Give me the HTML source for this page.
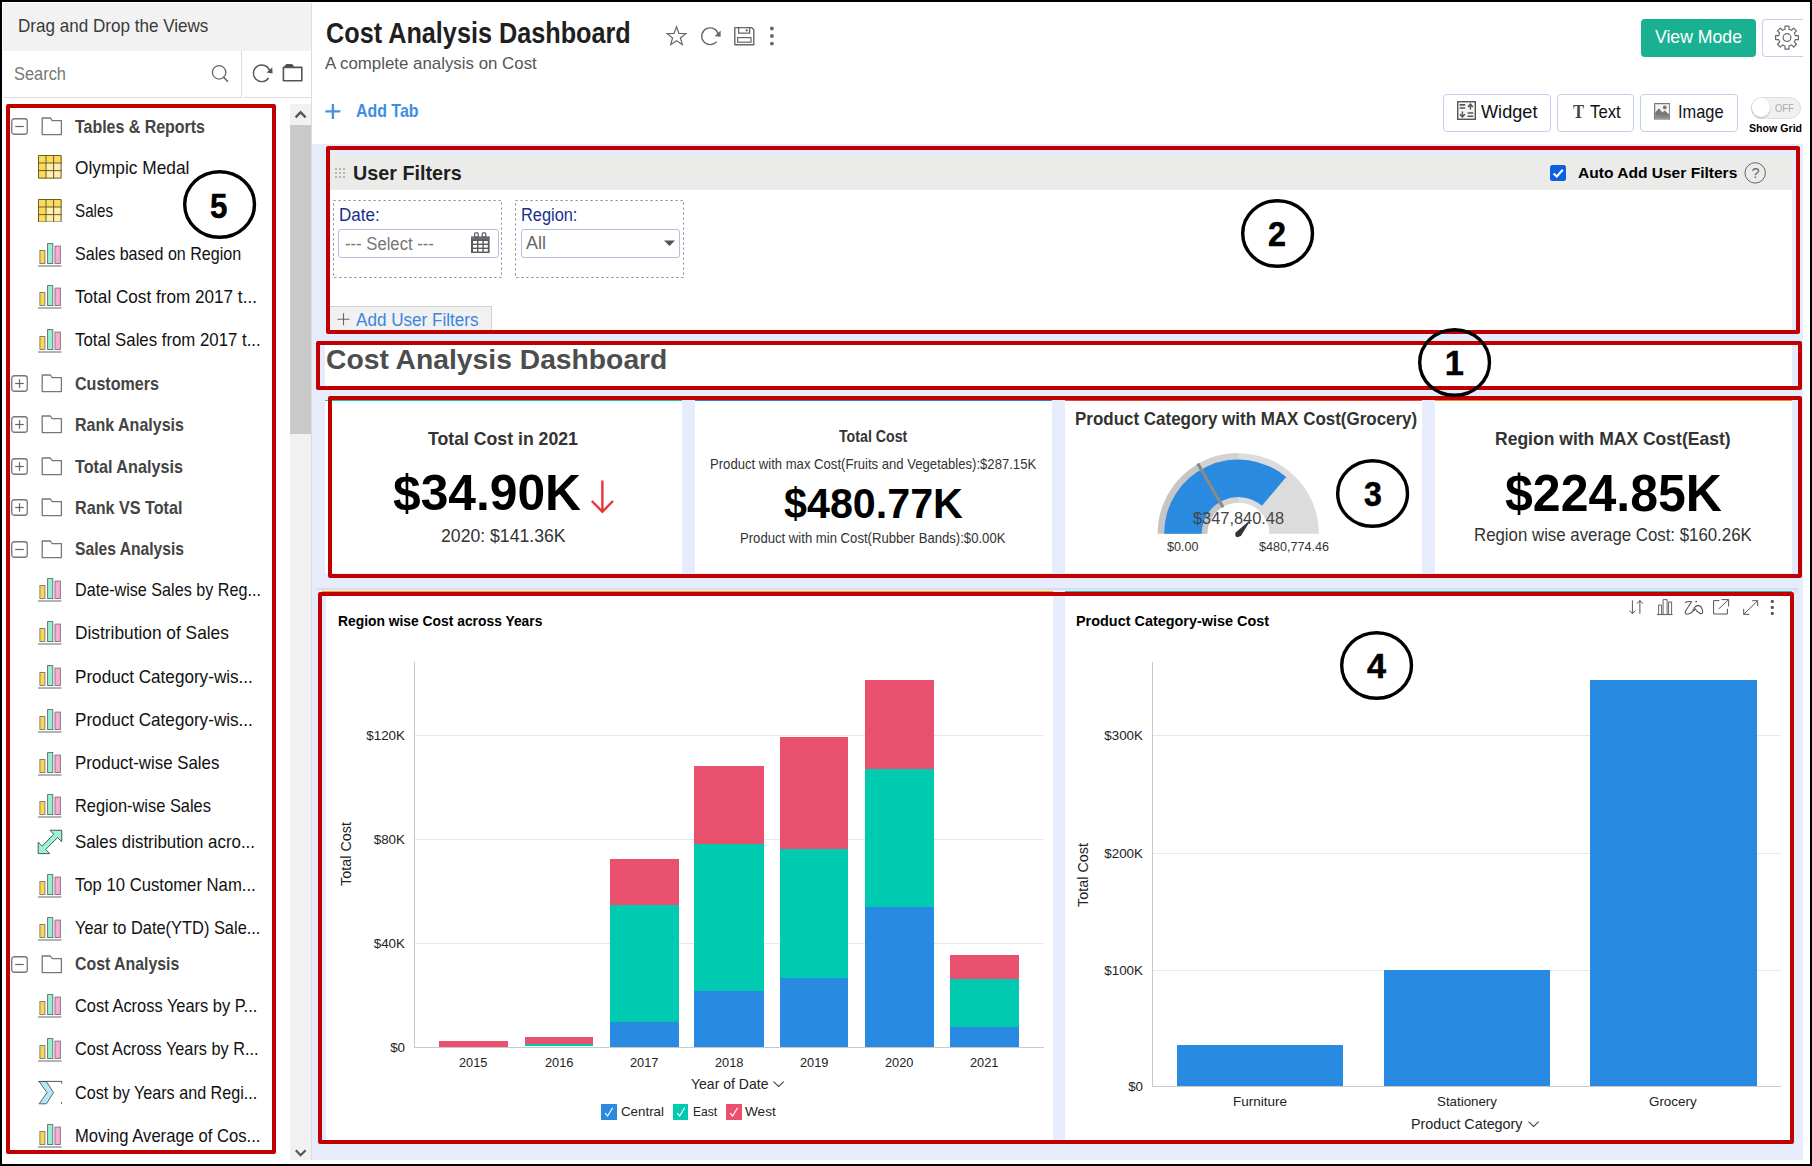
<!DOCTYPE html>
<html lang="en"><head><meta charset="utf-8"><title>Cost Analysis Dashboard</title><style>
html,body{margin:0;padding:0;background:#fff;}
body{width:1812px;height:1166px;position:relative;overflow:hidden;font-family:"Liberation Sans",sans-serif;}
.b{position:absolute;box-sizing:content-box;}
.t{position:absolute;white-space:nowrap;line-height:1;transform-origin:0 0;}
</style></head>
<body>
<div class="b" style="left:0.00px;top:0.00px;width:1812.00px;height:2.00px;background:#000;"></div>
<div class="b" style="left:0.00px;top:1164.00px;width:1812.00px;height:2.00px;background:#000;"></div>
<div class="b" style="left:0.00px;top:0.00px;width:2.00px;height:1166.00px;background:#000;"></div>
<div class="b" style="left:1810.00px;top:0.00px;width:2.00px;height:1166.00px;background:#000;"></div>
<div class="b" style="left:312.00px;top:144.00px;width:1491.00px;height:1016.00px;background:#e7ecfc;"></div>
<div class="b" style="left:3.00px;top:3.00px;width:308.00px;height:48.00px;background:#f2f2f2;"></div>
<div class="b" style="left:311.00px;top:3.00px;width:1.00px;height:1157.00px;background:#dcdcdc;"></div>
<div class="b" style="left:3.00px;top:97.00px;width:238.50px;height:1.00px;background:#dcdcdc;"></div>
<div class="b" style="left:244.00px;top:97.00px;width:67.00px;height:1.00px;background:#dcdcdc;"></div>
<div class="b" style="left:241.00px;top:51.00px;width:1.00px;height:47.00px;background:#dcdcdc;"></div>
<span class="t" style="left:17.50px;top:17.00px;font-size:18.40px;color:#3a3a3a;transform:scaleX(0.9281);">Drag and Drop the Views</span>
<span class="t" style="left:13.50px;top:65.00px;font-size:18.40px;color:#777;transform:scaleX(0.8915);">Search</span>
<svg class="b" style="left:208.00px;top:60.00px;" width="24" height="26" viewBox="0 0 24 26"><circle cx="11.1" cy="12.4" r="6.7" fill="none" stroke="#666" stroke-width="1.3"/><path d="M15.6 17.2 L19.5 21.3" stroke="#666" stroke-width="1.6" stroke-linecap="round"/></svg>
<svg class="b" style="left:250.00px;top:60.00px;" width="26" height="26" viewBox="0 0 26 26"><path d="M19.6 10.6 A8.3 8.3 0 1 0 18.6 18.0" fill="none" stroke="#555" stroke-width="1.4"/><path d="M22.2 7.6 L22.6 13.4 L16.6 12.4 Z" fill="#555"/></svg>
<svg class="b" style="left:280.00px;top:62.00px;" width="26" height="22" viewBox="0 0 26 22"><path d="M3.4 5.4 H21.8 V18.8 H3.4 Z" fill="none" stroke="#555" stroke-width="1.6" stroke-linejoin="round"/><path d="M4.6 4.4 L6.2 2.6 H12.2 L13.6 4.4 Z" fill="#444" stroke="#444" stroke-width="0.8" stroke-linejoin="round"/></svg>
<div class="b" style="left:290.00px;top:104.00px;width:21.00px;height:1056.00px;background:#f1f1f1;"></div>
<div class="b" style="left:290.00px;top:125.00px;width:21.00px;height:308.50px;background:#c9c9c9;"></div>
<svg class="b" style="left:290.00px;top:104.00px;" width="21" height="21" viewBox="0 0 21 21"><path d="M5.6 13.4 L10.6 8.2 L15.6 13.4" fill="none" stroke="#555" stroke-width="2.4"/></svg>
<svg class="b" style="left:290.00px;top:1142.00px;" width="21" height="18" viewBox="0 0 21 18"><path d="M5.8 8.2 L10.6 13.2 L15.6 8.2" fill="none" stroke="#555" stroke-width="2.2"/></svg>
<svg class="b" style="left:11.00px;top:118.00px;" width="17" height="17" viewBox="0 0 17 17"><rect x="0.75" y="0.75" width="15.5" height="15.5" rx="2.5" fill="#fff" stroke="#777" stroke-width="1.3"/><path d="M4.2 8.5 H12.8" stroke="#666" stroke-width="1.2"/></svg>
<svg class="b" style="left:41.00px;top:117.00px;" width="22" height="19" viewBox="0 0 22 19"><path d="M1.2 1 H9.4 L11.2 3.6 H20.4 V17.6 H1.2 Z" fill="#fff" stroke="#777" stroke-width="1.3" stroke-linejoin="round"/></svg>
<span class="t" style="left:75.00px;top:118.00px;font-size:18.40px;color:#444;font-weight:700;transform:scaleX(0.8669);">Tables &amp; Reports</span>
<svg class="b" style="left:38.00px;top:155.20px;" width="23.6" height="23.6" viewBox="0 0 23.6 23.6"><rect x="0" y="0" width="23.6" height="23.6" fill="#fdeeb0"/><rect x="0" y="0" width="23.6" height="8" fill="#f9dc5c"/><rect x="0" y="0" width="8" height="23.6" fill="#f9dc5c"/><path d="M0.5 0.5 H23.1 V23.1 H0.5 Z M8 0 V23.6 M15.6 0 V23.6 M0 8 H23.6 M0 15.6 H23.6" fill="none" stroke="#6b5a24" stroke-width="1"/></svg>
<span class="t" style="left:75.00px;top:159.00px;font-size:18.40px;color:#111;transform:scaleX(0.9407);">Olympic Medal</span>
<svg class="b" style="left:38.00px;top:199.20px;" width="23.6" height="22.6" viewBox="0 0 23.6 22.6"><rect x="0" y="0" width="23.6" height="23.6" fill="#fdeeb0"/><rect x="0" y="0" width="23.6" height="8" fill="#f9dc5c"/><rect x="0" y="0" width="8" height="23.6" fill="#f9dc5c"/><path d="M0.5 0.5 H23.1 V23.1 H0.5 Z M8 0 V23.6 M15.6 0 V23.6 M0 8 H23.6 M0 15.6 H23.6" fill="none" stroke="#6b5a24" stroke-width="1"/></svg>
<span class="t" style="left:75.00px;top:202.00px;font-size:18.40px;color:#111;transform:scaleX(0.8261);">Sales</span>
<svg class="b" style="left:38.00px;top:238.50px;" width="24" height="28" viewBox="0 0 24 28"><rect x="1.9" y="11.5" width="5" height="13" fill="#fbd84e" stroke="#777" stroke-width="0.9"/><rect x="9.6" y="4.6" width="5.2" height="19.9" fill="#98f0d2" stroke="#666" stroke-width="0.9"/><rect x="17" y="7.1" width="5.4" height="17.4" fill="#fba8d8" stroke="#777" stroke-width="0.9"/><path d="M0 27 H23.5" stroke="#666" stroke-width="1"/></svg>
<span class="t" style="left:75.00px;top:245.00px;font-size:18.40px;color:#111;transform:scaleX(0.8736);">Sales based on Region</span>
<svg class="b" style="left:38.00px;top:281.00px;" width="24" height="28" viewBox="0 0 24 28"><rect x="1.9" y="11.5" width="5" height="13" fill="#fbd84e" stroke="#777" stroke-width="0.9"/><rect x="9.6" y="4.6" width="5.2" height="19.9" fill="#98f0d2" stroke="#666" stroke-width="0.9"/><rect x="17" y="7.1" width="5.4" height="17.4" fill="#fba8d8" stroke="#777" stroke-width="0.9"/><path d="M0 27 H23.5" stroke="#666" stroke-width="1"/></svg>
<span class="t" style="left:75.00px;top:288.00px;font-size:18.40px;color:#111;transform:scaleX(0.9318);">Total Cost from 2017 t...</span>
<svg class="b" style="left:38.00px;top:324.70px;" width="24" height="28" viewBox="0 0 24 28"><rect x="1.9" y="11.5" width="5" height="13" fill="#fbd84e" stroke="#777" stroke-width="0.9"/><rect x="9.6" y="4.6" width="5.2" height="19.9" fill="#98f0d2" stroke="#666" stroke-width="0.9"/><rect x="17" y="7.1" width="5.4" height="17.4" fill="#fba8d8" stroke="#777" stroke-width="0.9"/><path d="M0 27 H23.5" stroke="#666" stroke-width="1"/></svg>
<span class="t" style="left:75.00px;top:331.00px;font-size:18.40px;color:#111;transform:scaleX(0.9125);">Total Sales from 2017 t...</span>
<svg class="b" style="left:11.00px;top:375.00px;" width="17" height="17" viewBox="0 0 17 17"><rect x="0.75" y="0.75" width="15.5" height="15.5" rx="2.5" fill="#fff" stroke="#777" stroke-width="1.3"/><path d="M4.2 8.5 H12.8" stroke="#666" stroke-width="1.2"/><path d="M8.5 4.2 V12.8" stroke="#666" stroke-width="1.2"/></svg>
<svg class="b" style="left:41.00px;top:374.00px;" width="22" height="19" viewBox="0 0 22 19"><path d="M1.2 1 H9.4 L11.2 3.6 H20.4 V17.6 H1.2 Z" fill="#fff" stroke="#777" stroke-width="1.3" stroke-linejoin="round"/></svg>
<span class="t" style="left:75.00px;top:375.00px;font-size:18.40px;color:#444;font-weight:700;transform:scaleX(0.8737);">Customers</span>
<svg class="b" style="left:11.00px;top:416.00px;" width="17" height="17" viewBox="0 0 17 17"><rect x="0.75" y="0.75" width="15.5" height="15.5" rx="2.5" fill="#fff" stroke="#777" stroke-width="1.3"/><path d="M4.2 8.5 H12.8" stroke="#666" stroke-width="1.2"/><path d="M8.5 4.2 V12.8" stroke="#666" stroke-width="1.2"/></svg>
<svg class="b" style="left:41.00px;top:415.00px;" width="22" height="19" viewBox="0 0 22 19"><path d="M1.2 1 H9.4 L11.2 3.6 H20.4 V17.6 H1.2 Z" fill="#fff" stroke="#777" stroke-width="1.3" stroke-linejoin="round"/></svg>
<span class="t" style="left:75.00px;top:416.00px;font-size:18.40px;color:#444;font-weight:700;transform:scaleX(0.8712);">Rank Analysis</span>
<svg class="b" style="left:11.00px;top:458.00px;" width="17" height="17" viewBox="0 0 17 17"><rect x="0.75" y="0.75" width="15.5" height="15.5" rx="2.5" fill="#fff" stroke="#777" stroke-width="1.3"/><path d="M4.2 8.5 H12.8" stroke="#666" stroke-width="1.2"/><path d="M8.5 4.2 V12.8" stroke="#666" stroke-width="1.2"/></svg>
<svg class="b" style="left:41.00px;top:457.00px;" width="22" height="19" viewBox="0 0 22 19"><path d="M1.2 1 H9.4 L11.2 3.6 H20.4 V17.6 H1.2 Z" fill="#fff" stroke="#777" stroke-width="1.3" stroke-linejoin="round"/></svg>
<span class="t" style="left:75.00px;top:458.00px;font-size:18.40px;color:#444;font-weight:700;transform:scaleX(0.8800);">Total Analysis</span>
<svg class="b" style="left:11.00px;top:499.20px;" width="17" height="17" viewBox="0 0 17 17"><rect x="0.75" y="0.75" width="15.5" height="15.5" rx="2.5" fill="#fff" stroke="#777" stroke-width="1.3"/><path d="M4.2 8.5 H12.8" stroke="#666" stroke-width="1.2"/><path d="M8.5 4.2 V12.8" stroke="#666" stroke-width="1.2"/></svg>
<svg class="b" style="left:41.00px;top:498.20px;" width="22" height="19" viewBox="0 0 22 19"><path d="M1.2 1 H9.4 L11.2 3.6 H20.4 V17.6 H1.2 Z" fill="#fff" stroke="#777" stroke-width="1.3" stroke-linejoin="round"/></svg>
<span class="t" style="left:75.00px;top:499.00px;font-size:18.40px;color:#444;font-weight:700;transform:scaleX(0.8786);">Rank VS Total</span>
<svg class="b" style="left:11.00px;top:540.50px;" width="17" height="17" viewBox="0 0 17 17"><rect x="0.75" y="0.75" width="15.5" height="15.5" rx="2.5" fill="#fff" stroke="#777" stroke-width="1.3"/><path d="M4.2 8.5 H12.8" stroke="#666" stroke-width="1.2"/></svg>
<svg class="b" style="left:41.00px;top:539.50px;" width="22" height="19" viewBox="0 0 22 19"><path d="M1.2 1 H9.4 L11.2 3.6 H20.4 V17.6 H1.2 Z" fill="#fff" stroke="#777" stroke-width="1.3" stroke-linejoin="round"/></svg>
<span class="t" style="left:75.00px;top:540.00px;font-size:18.40px;color:#444;font-weight:700;transform:scaleX(0.8505);">Sales Analysis</span>
<svg class="b" style="left:38.00px;top:574.00px;" width="24" height="28" viewBox="0 0 24 28"><rect x="1.9" y="11.5" width="5" height="13" fill="#fbd84e" stroke="#777" stroke-width="0.9"/><rect x="9.6" y="4.6" width="5.2" height="19.9" fill="#98f0d2" stroke="#666" stroke-width="0.9"/><rect x="17" y="7.1" width="5.4" height="17.4" fill="#fba8d8" stroke="#777" stroke-width="0.9"/><path d="M0 27 H23.5" stroke="#666" stroke-width="1"/></svg>
<span class="t" style="left:75.00px;top:581.00px;font-size:18.40px;color:#111;transform:scaleX(0.8786);">Date-wise Sales by Reg...</span>
<svg class="b" style="left:38.00px;top:617.00px;" width="24" height="28" viewBox="0 0 24 28"><rect x="1.9" y="11.5" width="5" height="13" fill="#fbd84e" stroke="#777" stroke-width="0.9"/><rect x="9.6" y="4.6" width="5.2" height="19.9" fill="#98f0d2" stroke="#666" stroke-width="0.9"/><rect x="17" y="7.1" width="5.4" height="17.4" fill="#fba8d8" stroke="#777" stroke-width="0.9"/><path d="M0 27 H23.5" stroke="#666" stroke-width="1"/></svg>
<span class="t" style="left:75.00px;top:624.00px;font-size:18.40px;color:#111;transform:scaleX(0.9409);">Distribution of Sales</span>
<svg class="b" style="left:38.00px;top:661.20px;" width="24" height="28" viewBox="0 0 24 28"><rect x="1.9" y="11.5" width="5" height="13" fill="#fbd84e" stroke="#777" stroke-width="0.9"/><rect x="9.6" y="4.6" width="5.2" height="19.9" fill="#98f0d2" stroke="#666" stroke-width="0.9"/><rect x="17" y="7.1" width="5.4" height="17.4" fill="#fba8d8" stroke="#777" stroke-width="0.9"/><path d="M0 27 H23.5" stroke="#666" stroke-width="1"/></svg>
<span class="t" style="left:75.00px;top:668.00px;font-size:18.40px;color:#111;transform:scaleX(0.9306);">Product Category-wis...</span>
<svg class="b" style="left:38.00px;top:704.50px;" width="24" height="28" viewBox="0 0 24 28"><rect x="1.9" y="11.5" width="5" height="13" fill="#fbd84e" stroke="#777" stroke-width="0.9"/><rect x="9.6" y="4.6" width="5.2" height="19.9" fill="#98f0d2" stroke="#666" stroke-width="0.9"/><rect x="17" y="7.1" width="5.4" height="17.4" fill="#fba8d8" stroke="#777" stroke-width="0.9"/><path d="M0 27 H23.5" stroke="#666" stroke-width="1"/></svg>
<span class="t" style="left:75.00px;top:711.00px;font-size:18.40px;color:#111;transform:scaleX(0.9306);">Product Category-wis...</span>
<svg class="b" style="left:38.00px;top:747.50px;" width="24" height="28" viewBox="0 0 24 28"><rect x="1.9" y="11.5" width="5" height="13" fill="#fbd84e" stroke="#777" stroke-width="0.9"/><rect x="9.6" y="4.6" width="5.2" height="19.9" fill="#98f0d2" stroke="#666" stroke-width="0.9"/><rect x="17" y="7.1" width="5.4" height="17.4" fill="#fba8d8" stroke="#777" stroke-width="0.9"/><path d="M0 27 H23.5" stroke="#666" stroke-width="1"/></svg>
<span class="t" style="left:75.00px;top:754.00px;font-size:18.40px;color:#111;transform:scaleX(0.9174);">Product-wise Sales</span>
<svg class="b" style="left:38.00px;top:790.20px;" width="24" height="28" viewBox="0 0 24 28"><rect x="1.9" y="11.5" width="5" height="13" fill="#fbd84e" stroke="#777" stroke-width="0.9"/><rect x="9.6" y="4.6" width="5.2" height="19.9" fill="#98f0d2" stroke="#666" stroke-width="0.9"/><rect x="17" y="7.1" width="5.4" height="17.4" fill="#fba8d8" stroke="#777" stroke-width="0.9"/><path d="M0 27 H23.5" stroke="#666" stroke-width="1"/></svg>
<span class="t" style="left:75.00px;top:797.00px;font-size:18.40px;color:#111;transform:scaleX(0.8927);">Region-wise Sales</span>
<svg class="b" style="left:37.00px;top:829.00px;" width="26" height="26" viewBox="0 0 26 26"><polygon points="13.09,1.24 24.75,1.24 24.75,12.63 20.50,8.58 8.65,20.44 12.70,24.60 1.19,24.60 1.19,13.20 5.28,17.08 16.64,5.29" fill="#98f5d6" stroke="#555" stroke-width="1"/></svg>
<span class="t" style="left:75.00px;top:833.00px;font-size:18.40px;color:#111;transform:scaleX(0.9168);">Sales distribution acro...</span>
<svg class="b" style="left:38.00px;top:869.70px;" width="24" height="28" viewBox="0 0 24 28"><rect x="1.9" y="11.5" width="5" height="13" fill="#fbd84e" stroke="#777" stroke-width="0.9"/><rect x="9.6" y="4.6" width="5.2" height="19.9" fill="#98f0d2" stroke="#666" stroke-width="0.9"/><rect x="17" y="7.1" width="5.4" height="17.4" fill="#fba8d8" stroke="#777" stroke-width="0.9"/><path d="M0 27 H23.5" stroke="#666" stroke-width="1"/></svg>
<span class="t" style="left:75.00px;top:876.00px;font-size:18.40px;color:#111;transform:scaleX(0.9065);">Top 10 Customer Nam...</span>
<svg class="b" style="left:38.00px;top:912.90px;" width="24" height="28" viewBox="0 0 24 28"><rect x="1.9" y="11.5" width="5" height="13" fill="#fbd84e" stroke="#777" stroke-width="0.9"/><rect x="9.6" y="4.6" width="5.2" height="19.9" fill="#98f0d2" stroke="#666" stroke-width="0.9"/><rect x="17" y="7.1" width="5.4" height="17.4" fill="#fba8d8" stroke="#777" stroke-width="0.9"/><path d="M0 27 H23.5" stroke="#666" stroke-width="1"/></svg>
<span class="t" style="left:75.00px;top:919.00px;font-size:18.40px;color:#111;transform:scaleX(0.8922);">Year to Date(YTD) Sale...</span>
<svg class="b" style="left:11.00px;top:955.90px;" width="17" height="17" viewBox="0 0 17 17"><rect x="0.75" y="0.75" width="15.5" height="15.5" rx="2.5" fill="#fff" stroke="#777" stroke-width="1.3"/><path d="M4.2 8.5 H12.8" stroke="#666" stroke-width="1.2"/></svg>
<svg class="b" style="left:41.00px;top:954.90px;" width="22" height="19" viewBox="0 0 22 19"><path d="M1.2 1 H9.4 L11.2 3.6 H20.4 V17.6 H1.2 Z" fill="#fff" stroke="#777" stroke-width="1.3" stroke-linejoin="round"/></svg>
<span class="t" style="left:75.00px;top:955.00px;font-size:18.40px;color:#444;font-weight:700;transform:scaleX(0.8621);">Cost Analysis</span>
<svg class="b" style="left:38.00px;top:990.10px;" width="24" height="28" viewBox="0 0 24 28"><rect x="1.9" y="11.5" width="5" height="13" fill="#fbd84e" stroke="#777" stroke-width="0.9"/><rect x="9.6" y="4.6" width="5.2" height="19.9" fill="#98f0d2" stroke="#666" stroke-width="0.9"/><rect x="17" y="7.1" width="5.4" height="17.4" fill="#fba8d8" stroke="#777" stroke-width="0.9"/><path d="M0 27 H23.5" stroke="#666" stroke-width="1"/></svg>
<span class="t" style="left:75.00px;top:997.00px;font-size:18.40px;color:#111;transform:scaleX(0.8931);">Cost Across Years by P...</span>
<svg class="b" style="left:38.00px;top:1033.90px;" width="24" height="28" viewBox="0 0 24 28"><rect x="1.9" y="11.5" width="5" height="13" fill="#fbd84e" stroke="#777" stroke-width="0.9"/><rect x="9.6" y="4.6" width="5.2" height="19.9" fill="#98f0d2" stroke="#666" stroke-width="0.9"/><rect x="17" y="7.1" width="5.4" height="17.4" fill="#fba8d8" stroke="#777" stroke-width="0.9"/><path d="M0 27 H23.5" stroke="#666" stroke-width="1"/></svg>
<span class="t" style="left:75.00px;top:1040.00px;font-size:18.40px;color:#111;transform:scaleX(0.8842);">Cost Across Years by R...</span>
<svg class="b" style="left:37.00px;top:1080.00px;" width="26" height="26" viewBox="0 0 26 26"><polygon points="2.08,1.6 9.42,1.6 16.56,12.6 9.42,23.8 2.08,23.8 10,12.6" fill="#b0e8fc" stroke="#555" stroke-width="0.9"/><path d="M1.3 1.4 H24.7 V3.6 M24.5 22 V23.8" fill="none" stroke="#555" stroke-width="1"/></svg>
<span class="t" style="left:75.00px;top:1084.00px;font-size:18.40px;color:#111;transform:scaleX(0.8784);">Cost by Years and Regi...</span>
<svg class="b" style="left:38.00px;top:1120.20px;" width="24" height="28" viewBox="0 0 24 28"><rect x="1.9" y="11.5" width="5" height="13" fill="#fbd84e" stroke="#777" stroke-width="0.9"/><rect x="9.6" y="4.6" width="5.2" height="19.9" fill="#98f0d2" stroke="#666" stroke-width="0.9"/><rect x="17" y="7.1" width="5.4" height="17.4" fill="#fba8d8" stroke="#777" stroke-width="0.9"/><path d="M0 27 H23.5" stroke="#666" stroke-width="1"/></svg>
<span class="t" style="left:75.00px;top:1127.00px;font-size:18.40px;color:#111;transform:scaleX(0.9038);">Moving Average of Cos...</span>
<div class="b" style="left:6.00px;top:104.00px;width:262.00px;height:1042.00px;border:4px solid #c00000;border-radius:2px;"></div>
<span class="t" style="left:325.70px;top:19.00px;font-size:28.60px;color:#1f1f1f;font-weight:700;transform:scaleX(0.8826);">Cost Analysis Dashboard</span>
<span class="t" style="left:325.00px;top:55.00px;font-size:17.00px;color:#555;transform:scaleX(0.9915);">A complete analysis on Cost</span>
<svg class="b" style="left:662.00px;top:22.00px;" width="30" height="28" viewBox="0 0 30 28"><polygon points="14.50,4.80 16.91,11.38 23.92,11.64 18.40,15.97 20.32,22.71 14.50,18.80 8.68,22.71 10.60,15.97 5.08,11.64 12.09,11.38" fill="none" stroke="#666" stroke-width="1.2" stroke-linejoin="miter"/></svg>
<svg class="b" style="left:696.00px;top:22.00px;" width="30" height="28" viewBox="0 0 30 28"><path d="M22.3 12.4 A8.4 8.4 0 1 0 20.6 19.6" fill="none" stroke="#666" stroke-width="1.3"/><path d="M24.6 8.6 L24.6 14.8 L18.6 14.2 Z" fill="#666"/></svg>
<svg class="b" style="left:731.00px;top:24.00px;" width="26" height="24" viewBox="0 0 26 24"><path d="M3.8 3.6 H20.6 L22.8 5.8 V20.8 H3.8 Z" fill="none" stroke="#666" stroke-width="1.4" stroke-linejoin="round"/><path d="M7.6 3.6 V9.2 H18.6 V3.6" fill="none" stroke="#666" stroke-width="1.3"/><rect x="14.7" y="5.3" width="2" height="2" fill="#666"/><rect x="6.6" y="13.6" width="13.4" height="4.6" fill="none" stroke="#666" stroke-width="1.2"/></svg>
<svg class="b" style="left:766.00px;top:24.00px;" width="12" height="24" viewBox="0 0 12 24"><circle cx="5.9" cy="4.5" r="1.9" fill="#666"/><circle cx="5.9" cy="12" r="1.9" fill="#666"/><circle cx="5.9" cy="19.6" r="1.9" fill="#666"/></svg>
<div class="b" style="left:1641.00px;top:19.00px;width:115.00px;height:38.00px;background:#1ab192;border-radius:4px;"></div>
<span class="t" style="left:1655.10px;top:28.00px;font-size:18.40px;color:#fff;transform:scaleX(0.9591);">View Mode</span>
<div class="b" style="left:1762.00px;top:19.00px;width:50.00px;height:36.00px;border:1px solid #c5cfec;border-right:none;border-radius:4px 0 0 4px;background:#fff;width:40px;"></div>
<svg class="b" style="left:1772.00px;top:23.00px;" width="30" height="30" viewBox="0 0 30 30"><path d="M26.43 12.61 L26.43 16.59 L23.36 16.61 L22.33 19.09 L24.49 21.27 L21.67 24.09 L19.49 21.93 L17.01 22.96 L16.99 26.03 L13.01 26.03 L12.99 22.96 L10.51 21.93 L8.33 24.09 L5.51 21.27 L7.67 19.09 L6.64 16.61 L3.57 16.59 L3.57 12.61 L6.64 12.59 L7.67 10.11 L5.51 7.93 L8.33 5.11 L10.51 7.27 L12.99 6.24 L13.01 3.17 L16.99 3.17 L17.01 6.24 L19.49 7.27 L21.67 5.11 L24.49 7.93 L22.33 10.11 L23.36 12.59 Z" fill="none" stroke="#666" stroke-width="1.2" stroke-linejoin="round"/><circle cx="15" cy="14.6" r="3.9" fill="none" stroke="#666" stroke-width="1.2"/></svg>
<div class="b" style="left:1803.00px;top:2.00px;width:7.00px;height:1162.00px;background:#fff;"></div>
<svg class="b" style="left:322.00px;top:100.00px;" width="22" height="22" viewBox="0 0 22 22"><path d="M3.4 11.4 H18.4 M10.9 3.9 V18.9" stroke="#4a90e2" stroke-width="2.4" fill="none"/></svg>
<span class="t" style="left:356.20px;top:102.00px;font-size:18.40px;color:#3d8ee4;font-weight:700;transform:scaleX(0.8654);">Add Tab</span>
<div class="b" style="left:1443.00px;top:94.00px;width:106.00px;height:36.00px;border:1px solid #c5cfec;border-radius:4px;background:#fff;"></div>
<div class="b" style="left:1557.00px;top:94.00px;width:75.00px;height:36.00px;border:1px solid #c5cfec;border-radius:4px;background:#fff;"></div>
<div class="b" style="left:1640.00px;top:94.00px;width:96.00px;height:36.00px;border:1px solid #c5cfec;border-radius:4px;background:#fff;"></div>
<svg class="b" style="left:1457.00px;top:101.00px;" width="19" height="19" viewBox="0 0 19 19"><rect x="0.7" y="0.7" width="17.6" height="17.6" fill="#f6f6f6" stroke="#555" stroke-width="1.4"/><path d="M2.6 3.9 H8.2 M2.6 7 H8.2 M10.6 12 H16.2 M10.6 15.2 H16.2" stroke="#555" stroke-width="1.6"/><path d="M13.4 8.6 V4 M10.9 5.9 L13.4 3.2 L15.9 5.9" fill="none" stroke="#555" stroke-width="1.5"/><path d="M5.4 10.6 V15.2 M2.9 13.3 L5.4 16 L7.9 13.3" fill="none" stroke="#555" stroke-width="1.5"/></svg>
<span class="t" style="left:1480.60px;top:103.00px;font-size:18.40px;color:#111;transform:scaleX(0.9856);">Widget</span>
<span class="t" style="left:1572.50px;top:103.00px;font-size:18.80px;color:#444;font-weight:700;font-family:'Liberation Serif',serif;transform:scaleX(0.8799);">T</span>
<span class="t" style="left:1589.50px;top:103.00px;font-size:18.40px;color:#111;transform:scaleX(0.9122);">Text</span>
<svg class="b" style="left:1654.00px;top:103.30px;" width="16.4" height="16.6" viewBox="0 0 16.4 16.6"><rect x="0.6" y="0.6" width="15.2" height="15.4" fill="#f2f2f2" stroke="#777" stroke-width="1.2"/><path d="M1.2 13 L1.2 9.6 L5 5.2 L8.4 9.4 L10.6 7.6 L15.2 11.6 V13 Z" fill="#777"/><rect x="1.2" y="12.4" width="14" height="3" fill="#888"/><circle cx="10.8" cy="4.4" r="1.9" fill="#777"/></svg>
<span class="t" style="left:1678.40px;top:103.00px;font-size:18.40px;color:#111;transform:scaleX(0.8915);">Image</span>
<div class="b" style="left:1751.00px;top:97.00px;width:47.50px;height:19.50px;border:1px solid #e0e0e0;border-radius:11px;background:#f1f1f1;"></div>
<div class="b" style="left:1751.60px;top:98.00px;width:18.60px;height:18.60px;border-radius:50%;background:#fff;box-shadow:0 1px 2px rgba(0,0,0,.25);"></div>
<span class="t" style="left:1774.60px;top:104.00px;font-size:10.20px;color:#aaa;transform:scaleX(0.9265);">OFF</span>
<span class="t" style="left:1748.70px;top:122.00px;font-size:11.60px;color:#000;font-weight:700;transform:scaleX(0.9155);">Show Grid</span>
<div class="b" style="left:330.00px;top:150.00px;width:1466.00px;height:180.00px;background:#fff;"></div>
<div class="b" style="left:330.00px;top:150.00px;width:1466.00px;height:4.60px;background:#e7ecfc;"></div>
<div class="b" style="left:1792.00px;top:150.00px;width:4.00px;height:180.00px;background:#e7ecfc;"></div>
<div class="b" style="left:330.00px;top:154.60px;width:1462.00px;height:35.40px;background:#ebebea;"></div>
<svg class="b" style="left:334.00px;top:166.50px;" width="12" height="12" viewBox="0 0 12 12"><rect x="1" y="1" width="2" height="2" fill="#b5b5b5"/><rect x="1" y="5" width="2" height="2" fill="#b5b5b5"/><rect x="1" y="9" width="2" height="2" fill="#b5b5b5"/><rect x="5" y="1" width="2" height="2" fill="#b5b5b5"/><rect x="5" y="5" width="2" height="2" fill="#b5b5b5"/><rect x="5" y="9" width="2" height="2" fill="#b5b5b5"/><rect x="9" y="1" width="2" height="2" fill="#b5b5b5"/><rect x="9" y="5" width="2" height="2" fill="#b5b5b5"/><rect x="9" y="9" width="2" height="2" fill="#b5b5b5"/></svg>
<span class="t" style="left:352.80px;top:163.00px;font-size:20.60px;color:#1f1f1f;font-weight:700;transform:scaleX(0.9594);">User Filters</span>
<div class="b" style="left:1550.00px;top:164.70px;width:16.20px;height:16.20px;background:#0b60e0;border-radius:2.5px;"><svg width="16.2" height="16.2" viewBox="0 0 16.2 16.2" style="position:absolute;left:0;top:0"><path d="M3.6 8.4 L6.8 11.4 L12.8 4.8" fill="none" stroke="#fff" stroke-width="2.1"/></svg></div>
<span class="t" style="left:1577.70px;top:165.00px;font-size:15.40px;color:#000;font-weight:700;transform:scaleX(1.0108);">Auto Add User Filters</span>
<svg class="b" style="left:1744.00px;top:162.00px;" width="23" height="23" viewBox="0 0 23 23"><circle cx="11.2" cy="10.9" r="10.2" fill="none" stroke="#666" stroke-width="1"/></svg>
<span class="t" style="left:1751.38px;top:166.00px;font-size:14.50px;color:#666;">?</span>
<svg class="b" style="left:332.00px;top:199.00px;" width="171" height="80" viewBox="0 0 171 80"><rect x="1.5" y="1.5" width="168" height="77" fill="none" stroke="#8c8c8c" stroke-width="1" stroke-dasharray="2.2 2.8"/></svg>
<svg class="b" style="left:514.00px;top:199.00px;" width="171" height="80" viewBox="0 0 171 80"><rect x="1.5" y="1.5" width="168" height="77" fill="none" stroke="#8c8c8c" stroke-width="1" stroke-dasharray="2.2 2.8"/></svg>
<span class="t" style="left:339.10px;top:207.00px;font-size:17.60px;color:#1a2e8a;transform:scaleX(0.9676);">Date:</span>
<span class="t" style="left:520.60px;top:207.00px;font-size:17.60px;color:#1a2e8a;transform:scaleX(0.9302);">Region:</span>
<div class="b" style="left:338.00px;top:229.00px;width:158.50px;height:27.00px;border:1px solid #b7bfdc;border-radius:3px;background:#fff;"></div>
<div class="b" style="left:520.50px;top:229.00px;width:157.50px;height:27.00px;border:1px solid #b7bfdc;border-radius:3px;background:#fff;"></div>
<span class="t" style="left:344.90px;top:235.00px;font-size:18.00px;color:#777;transform:scaleX(0.9258);">--- Select ---</span>
<svg class="b" style="left:470.00px;top:232.00px;" width="21" height="22" viewBox="0 0 21 22"><path d="M1 4.6 H19.6 V21 H1 Z" fill="#5a5a5a"/><path d="M1 4.6 H19.6 V7.4 H1 Z" fill="#6a6a6a"/><rect x="3" y="9" width="4" height="2.6" fill="#fff"/><rect x="3" y="13" width="4" height="2.6" fill="#fff"/><rect x="3" y="17" width="4" height="2.6" fill="#fff"/><rect x="8.4" y="9" width="4" height="2.6" fill="#fff"/><rect x="8.4" y="13" width="4" height="2.6" fill="#fff"/><rect x="8.4" y="17" width="4" height="2.6" fill="#fff"/><rect x="13.8" y="9" width="4" height="2.6" fill="#fff"/><rect x="13.8" y="13" width="4" height="2.6" fill="#fff"/><rect x="13.8" y="17" width="4" height="2.6" fill="#fff"/><rect x="4.6" y="0.8" width="3.6" height="4.4" rx="1" fill="none" stroke="#5a5a5a" stroke-width="1.2"/><rect x="12.2" y="0.8" width="3.6" height="4.4" rx="1" fill="none" stroke="#5a5a5a" stroke-width="1.2"/></svg>
<span class="t" style="left:526.00px;top:235.00px;font-size:17.80px;color:#666;transform:scaleX(1.0122);">All</span>
<svg class="b" style="left:662.00px;top:238.00px;" width="16" height="10" viewBox="0 0 16 10"><path d="M2 2.5 H13 L7.5 8 Z" fill="#555"/></svg>
<div class="b" style="left:330.00px;top:306.00px;width:161.00px;height:24.00px;background:#f1f1f1;border:1px solid #d0d0d0;border-left:none;border-bottom:none;"></div>
<svg class="b" style="left:336.00px;top:312.00px;" width="15" height="15" viewBox="0 0 15 15"><path d="M1.5 7.2 H13.5 M7.5 1.2 V13.2" stroke="#666" stroke-width="1.1"/></svg>
<span class="t" style="left:355.50px;top:311.00px;font-size:18.00px;color:#3a86e0;transform:scaleX(0.9492);">Add User Filters</span>
<div class="b" style="left:326.00px;top:146.00px;width:1466.00px;height:180.00px;border:4px solid #c00000;border-radius:2px;"></div>
<div class="b" style="left:325.00px;top:344.00px;width:1467.00px;height:42.00px;background:#fff;"></div>
<span class="t" style="left:325.70px;top:347.00px;font-size:27.00px;color:#4d4d4d;font-weight:700;transform:scaleX(1.0469);">Cost Analysis Dashboard</span>
<div class="b" style="left:316.00px;top:340.50px;width:1477.50px;height:41.50px;border:4px solid #c00000;border-radius:2px;"></div>
<div class="b" style="left:325.00px;top:400.00px;width:357.00px;height:172.50px;background:#fff;"></div>
<div class="b" style="left:325.00px;top:400.00px;width:357.00px;height:1.00px;background:#17c3a2;"></div>
<div class="b" style="left:695.00px;top:400.00px;width:357.00px;height:172.50px;background:#fff;"></div>
<div class="b" style="left:695.00px;top:400.00px;width:357.00px;height:1.00px;background:#2d7fe0;"></div>
<div class="b" style="left:1065.00px;top:400.00px;width:357.00px;height:172.50px;background:#fff;"></div>
<div class="b" style="left:1065.00px;top:400.00px;width:357.00px;height:1.00px;background:#e0483e;"></div>
<div class="b" style="left:1435.00px;top:400.00px;width:357.00px;height:172.50px;background:#fff;"></div>
<div class="b" style="left:1435.00px;top:400.00px;width:357.00px;height:1.00px;background:#f08a24;"></div>
<span class="t" style="left:428.00px;top:430.00px;font-size:18.40px;color:#333;font-weight:700;transform:scaleX(0.9608);">Total Cost in 2021</span>
<span class="t" style="left:392.50px;top:468.00px;font-size:50.00px;color:#000;font-weight:700;transform:scaleX(0.9947);">$34.90K</span>
<svg class="b" style="left:588.00px;top:476.00px;" width="28" height="40" viewBox="0 0 28 40"><path d="M14.4 4.4 V35.6 M3.8 25 L14.4 35.8 L25 25" fill="none" stroke="#e8353b" stroke-width="2.4"/></svg>
<span class="t" style="left:441.00px;top:528.00px;font-size:17.80px;color:#333;transform:scaleX(0.9923);">2020: $141.36K</span>
<span class="t" style="left:838.70px;top:429.00px;font-size:15.60px;color:#333;font-weight:700;transform:scaleX(0.9093);">Total Cost</span>
<span class="t" style="left:709.50px;top:457.00px;font-size:14.20px;color:#333;transform:scaleX(0.9232);">Product with max Cost(Fruits and Vegetables):$287.15K</span>
<span class="t" style="left:783.70px;top:483.00px;font-size:42.00px;color:#000;font-weight:700;transform:scaleX(0.9820);">$480.77K</span>
<span class="t" style="left:740.00px;top:531.00px;font-size:14.20px;color:#333;transform:scaleX(0.9247);">Product with min Cost(Rubber Bands):$0.00K</span>
<span class="t" style="left:1075.30px;top:410.00px;font-size:18.40px;color:#333;font-weight:700;transform:scaleX(0.9226);">Product Category with MAX Cost(Grocery)</span>
<svg class="b" style="left:1140.00px;top:440.00px;" width="200" height="110" viewBox="0 0 200 110"><path d="M17.70 93.70 A80.6 80.6 0 0 1 178.90 93.70 L129.30 93.70 A31 31 0 0 0 67.30 93.70 Z" fill="#dcdcdc"/><path d="M17.70 93.70 A80.6 80.6 0 0 1 58.00 23.90 L82.80 66.85 A31 31 0 0 0 67.30 93.70 Z" fill="#c6c6c6"/><path d="M58.00 23.90 A80.6 80.6 0 0 1 98.30 13.10 L98.30 62.70 A31 31 0 0 0 82.80 66.85 Z" fill="#d2d2d2"/><path d="M24.10 93.70 A74.2 74.2 0 0 1 146.19 37.03 L121.92 65.75 A36.6 36.6 0 0 0 61.70 93.70 Z" fill="#2a8ae0"/><path d="M83.05 67.29 L57.80 23.55" stroke="#8a8a8a" stroke-width="3.1"/><path d="M110.90 79.50 L100.90 95.90 L97.10 97.30 Q94.10 95.90 95.90 92.30 Z" fill="#333"/></svg>
<span class="t" style="left:1192.80px;top:511.00px;font-size:16.60px;color:#444;transform:scaleX(0.9860);">$347,840.48</span>
<span class="t" style="left:1167.00px;top:540.00px;font-size:13.60px;color:#333;transform:scaleX(0.9246);">$0.00</span>
<span class="t" style="left:1259.30px;top:540.00px;font-size:13.60px;color:#333;transform:scaleX(0.9257);">$480,774.46</span>
<span class="t" style="left:1495.00px;top:430.00px;font-size:18.40px;color:#333;font-weight:700;transform:scaleX(0.9528);">Region with MAX Cost(East)</span>
<span class="t" style="left:1504.70px;top:468.00px;font-size:51.00px;color:#000;font-weight:700;transform:scaleX(0.9806);">$224.85K</span>
<span class="t" style="left:1474.00px;top:527.00px;font-size:17.80px;color:#333;transform:scaleX(0.9460);">Region wise average Cost: $160.26K</span>
<div class="b" style="left:328.00px;top:396.30px;width:1465.50px;height:173.70px;border:4px solid #c00000;border-radius:2px;"></div>
<div class="b" style="left:326.00px;top:595.00px;width:727.00px;height:545.00px;background:#fff;"></div>
<div class="b" style="left:1065.00px;top:595.00px;width:726.00px;height:545.00px;background:#fff;"></div>
<div class="b" style="left:316.00px;top:588.00px;width:1482.00px;height:2.00px;background:#d8ddec;"></div>
<div class="b" style="left:1794.00px;top:590.00px;width:4.00px;height:3.00px;background:#dde2f0;"></div>
<div class="b" style="left:322.00px;top:591.00px;width:731.00px;height:1.50px;background:#f0a020;"></div>
<div class="b" style="left:1065.00px;top:590.50px;width:727.00px;height:1.50px;background:#2bb8a8;"></div>
<span class="t" style="left:337.50px;top:613.00px;font-size:15.40px;color:#000;font-weight:700;transform:scaleX(0.8994);">Region wise Cost across Years</span>
<span class="t" style="left:1075.50px;top:613.00px;font-size:15.40px;color:#000;font-weight:700;transform:scaleX(0.9369);">Product Category-wise Cost</span>
<svg class="b" style="left:0;top:0" width="1812" height="1166" viewBox="0 0 1812 1166" shape-rendering="crispEdges"><path d="M414.5 735.5 H1043.7" stroke="#e8e8e8" stroke-width="1"/><path d="M414.5 839.3 H1043.7" stroke="#e8e8e8" stroke-width="1"/><path d="M414.5 943.2 H1043.7" stroke="#e8e8e8" stroke-width="1"/><rect x="439.3" y="1041.0" width="68.7" height="5.8" fill="#e8506e"/><rect x="524.6" y="1036.8" width="68.7" height="6.8" fill="#e8506e"/><rect x="524.6" y="1043.6" width="68.7" height="2.8" fill="#00cbb0"/><rect x="610.0" y="1022.0" width="68.7" height="25.0" fill="#288ae0"/><rect x="610.0" y="904.7" width="68.7" height="117.3" fill="#00cbb0"/><rect x="610.0" y="859.0" width="68.7" height="45.7" fill="#e8506e"/><rect x="694.4" y="990.5" width="69.2" height="56.5" fill="#288ae0"/><rect x="694.4" y="843.7" width="69.2" height="146.8" fill="#00cbb0"/><rect x="694.4" y="765.7" width="69.2" height="78.0" fill="#e8506e"/><rect x="779.5" y="978.0" width="68.9" height="69.0" fill="#288ae0"/><rect x="779.5" y="848.7" width="68.9" height="129.3" fill="#00cbb0"/><rect x="779.5" y="736.7" width="68.9" height="112.0" fill="#e8506e"/><rect x="865.0" y="906.8" width="68.8" height="140.2" fill="#288ae0"/><rect x="865.0" y="769.0" width="68.8" height="137.8" fill="#00cbb0"/><rect x="865.0" y="679.5" width="68.8" height="89.5" fill="#e8506e"/><rect x="950.0" y="1026.5" width="69.0" height="20.5" fill="#288ae0"/><rect x="950.0" y="979.0" width="69.0" height="47.5" fill="#00cbb0"/><rect x="950.0" y="955.2" width="69.0" height="23.8" fill="#e8506e"/><path d="M414.5 662 V1047.2 H1043.7" fill="none" stroke="#c8c8c8" stroke-width="1"/></svg>
<span class="t" style="left:366.27px;top:729.00px;font-size:13.40px;color:#222;">$120K</span>
<span class="t" style="left:373.71px;top:833.00px;font-size:13.40px;color:#222;">$80K</span>
<span class="t" style="left:373.71px;top:937.00px;font-size:13.40px;color:#222;">$40K</span>
<span class="t" style="left:390.13px;top:1041.00px;font-size:13.40px;color:#222;">$0</span>
<span class="t" style="left:459.45px;top:1056.00px;font-size:13.40px;color:#222;transform:scaleX(0.9559);">2015</span>
<span class="t" style="left:544.55px;top:1056.00px;font-size:13.40px;color:#222;transform:scaleX(0.9559);">2016</span>
<span class="t" style="left:629.95px;top:1056.00px;font-size:13.40px;color:#222;transform:scaleX(0.9559);">2017</span>
<span class="t" style="left:714.55px;top:1056.00px;font-size:13.40px;color:#222;transform:scaleX(0.9559);">2018</span>
<span class="t" style="left:799.95px;top:1056.00px;font-size:13.40px;color:#222;transform:scaleX(0.9559);">2019</span>
<span class="t" style="left:885.05px;top:1056.00px;font-size:13.40px;color:#222;transform:scaleX(0.9559);">2020</span>
<span class="t" style="left:969.75px;top:1056.00px;font-size:13.40px;color:#222;transform:scaleX(0.9559);">2021</span>
<span class="t" style="left:690.50px;top:1077.00px;font-size:14.60px;color:#222;transform:scaleX(0.9608);">Year of Date</span>
<svg class="b" style="left:772.00px;top:1078.00px;" width="14" height="12" viewBox="0 0 14 12"><path d="M1.5 3.6 L6.6 8.4 L11.7 3.6" fill="none" stroke="#444" stroke-width="1.1"/></svg>
<div class="b" style="left:601.00px;top:1104.00px;width:15.80px;height:16.40px;background:#288ae0;"><svg width="16" height="17" viewBox="0 0 16 17" style="position:absolute;left:0;top:0"><path d="M4.2 9.2 L6.6 12 L11.6 3.8" fill="none" stroke="#fff" stroke-width="1.2"/></svg></div>
<span class="t" style="left:620.70px;top:1105.00px;font-size:13.60px;color:#222;transform:scaleX(0.9804);">Central</span>
<div class="b" style="left:672.50px;top:1104.00px;width:15.80px;height:16.40px;background:#00cbb0;"><svg width="16" height="17" viewBox="0 0 16 17" style="position:absolute;left:0;top:0"><path d="M4.2 9.2 L6.6 12 L11.6 3.8" fill="none" stroke="#fff" stroke-width="1.2"/></svg></div>
<span class="t" style="left:692.50px;top:1105.00px;font-size:13.60px;color:#222;transform:scaleX(0.8897);">East</span>
<div class="b" style="left:726.00px;top:1104.00px;width:15.80px;height:16.40px;background:#e8506e;"><svg width="16" height="17" viewBox="0 0 16 17" style="position:absolute;left:0;top:0"><path d="M4.2 9.2 L6.6 12 L11.6 3.8" fill="none" stroke="#fff" stroke-width="1.2"/></svg></div>
<span class="t" style="left:745.00px;top:1105.00px;font-size:13.60px;color:#222;">West</span>
<span class="t" style="left:339px;top:886px;font-size:14.4px;color:#222;transform:rotate(-90deg) scaleX(1.0);transform-origin:0 0;">Total Cost</span>
<svg class="b" style="left:0;top:0" width="1812" height="1166" viewBox="0 0 1812 1166" shape-rendering="crispEdges"><path d="M1152.5 735.7 H1781" stroke="#e8e8e8" stroke-width="1"/><path d="M1152.5 853.0 H1781" stroke="#e8e8e8" stroke-width="1"/><path d="M1152.5 970.2 H1781" stroke="#e8e8e8" stroke-width="1"/><rect x="1177.0" y="1045.2" width="166.2" height="40.6" fill="#288ae0"/><rect x="1384.0" y="970.2" width="166.2" height="115.6" fill="#288ae0"/><rect x="1590.2" y="680.0" width="166.8" height="405.8" fill="#288ae0"/><path d="M1152.5 662 V1086 H1781" fill="none" stroke="#c8c8c8" stroke-width="1"/></svg>
<span class="t" style="left:1104.27px;top:729.00px;font-size:13.40px;color:#222;">$300K</span>
<span class="t" style="left:1104.27px;top:847.00px;font-size:13.40px;color:#222;">$200K</span>
<span class="t" style="left:1104.27px;top:964.00px;font-size:13.40px;color:#222;">$100K</span>
<span class="t" style="left:1128.13px;top:1080.00px;font-size:13.40px;color:#222;">$0</span>
<span class="t" style="left:1233.00px;top:1095.00px;font-size:13.40px;color:#222;transform:scaleX(1.0075);">Furniture</span>
<span class="t" style="left:1436.50px;top:1095.00px;font-size:13.40px;color:#222;transform:scaleX(0.9939);">Stationery</span>
<span class="t" style="left:1649.00px;top:1095.00px;font-size:13.40px;color:#222;">Grocery</span>
<span class="t" style="left:1411.20px;top:1117.00px;font-size:14.60px;color:#222;transform:scaleX(0.9816);">Product Category</span>
<svg class="b" style="left:1527.00px;top:1118.00px;" width="14" height="12" viewBox="0 0 14 12"><path d="M1.5 3.6 L6.6 8.4 L11.7 3.6" fill="none" stroke="#444" stroke-width="1.1"/></svg>
<span class="t" style="left:1076px;top:906.5px;font-size:14.4px;color:#222;transform:rotate(-90deg) scaleX(1.0);transform-origin:0 0;">Total Cost</span>
<svg class="b" style="left:1629.00px;top:599.40px;" width="15" height="16" viewBox="0 0 15 16"><path d="M3.4 1.4 V14.6 M0.6 11.6 L3.4 14.8 L6.2 11.6 M10.9 14.8 V1.6 M8.1 4.6 L10.9 1.4 L13.7 4.6" fill="none" stroke="#555" stroke-width="1"/></svg>
<svg class="b" style="left:1657.20px;top:599.00px;" width="16" height="17" viewBox="0 0 16 17"><path d="M0 15.6 H15.6" stroke="#555" stroke-width="1"/><path d="M1.6 15 V6 H4.6 V15 M6.1 15 V0.6 H10.1 V15 M11.6 15 V3 H14.6 V15" fill="none" stroke="#555" stroke-width="0.9"/></svg>
<svg class="b" style="left:1683.60px;top:600.00px;" width="20" height="16" viewBox="0 0 20 16"><path d="M1 2.8 Q4 1 7.6 1.8 Q3.4 8 1.4 11.6 Q0.6 14.4 4 14 Q8 13.6 9.4 9.8 Q10.6 6 14.2 5.4 Q17.6 5.6 18.6 11 Q19 14.4 16 13.4 Q12.6 11.6 11.4 9 Q9.6 11.6 7.8 11.4" fill="none" stroke="#555" stroke-width="1.1"/><circle cx="12.2" cy="1.6" r="0.9" fill="#555"/></svg>
<svg class="b" style="left:1713.00px;top:599.00px;" width="17" height="16" viewBox="0 0 17 16"><path d="M6.4 1.6 H0.6 V15 H14.4 V9.8 M8.6 0.6 H15.6 V7.6 M15.4 0.8 L5.6 10" fill="none" stroke="#555" stroke-width="1"/></svg>
<svg class="b" style="left:1742.60px;top:599.60px;" width="16" height="15" viewBox="0 0 16 15"><path d="M0.8 14.2 L14.6 0.8 M9.2 0.7 H14.7 V6 M0.7 8.8 V14.3 H6.2" fill="none" stroke="#555" stroke-width="1"/></svg>
<svg class="b" style="left:1769.00px;top:598.00px;" width="8" height="20" viewBox="0 0 8 20"><circle cx="3.3" cy="3.4" r="1.6" fill="#555"/><circle cx="3.3" cy="9.4" r="1.6" fill="#555"/><circle cx="3.3" cy="15.4" r="1.6" fill="#555"/></svg>
<div class="b" style="left:318.00px;top:591.70px;width:1468.00px;height:544.30px;border:4px solid #c00000;border-radius:2px;"></div>
<svg class="b" style="left:181.60px;top:169.40px;" width="75.2" height="71" viewBox="0 0 75.2 71"><ellipse cx="37.6" cy="35.5" rx="34.9" ry="32.8" fill="none" stroke="#000" stroke-width="3.4"/></svg>
<span class="t" style="left:210.20px;top:189.00px;font-size:34.40px;color:#000;font-weight:700;transform:scaleX(0.9114);-webkit-text-stroke:0.5px #000;">5</span>
<svg class="b" style="left:1239.50px;top:197.50px;" width="75.2" height="71" viewBox="0 0 75.2 71"><ellipse cx="37.6" cy="35.5" rx="34.9" ry="32.8" fill="none" stroke="#000" stroke-width="3.4"/></svg>
<span class="t" style="left:1267.80px;top:217.00px;font-size:34.40px;color:#000;font-weight:700;transform:scaleX(0.9428);-webkit-text-stroke:0.5px #000;">2</span>
<svg class="b" style="left:1417.10px;top:326.90px;" width="75.2" height="71" viewBox="0 0 75.2 71"><ellipse cx="37.6" cy="35.5" rx="34.9" ry="32.8" fill="none" stroke="#000" stroke-width="3.4"/></svg>
<span class="t" style="left:1444.85px;top:346.00px;font-size:34.40px;color:#000;font-weight:700;-webkit-text-stroke:0.5px #000;">1</span>
<svg class="b" style="left:1335.20px;top:457.50px;" width="75.2" height="71" viewBox="0 0 75.2 71"><ellipse cx="37.6" cy="35.5" rx="34.9" ry="32.8" fill="none" stroke="#000" stroke-width="3.4"/></svg>
<span class="t" style="left:1363.60px;top:477.00px;font-size:34.40px;color:#000;font-weight:700;transform:scaleX(0.9323);-webkit-text-stroke:0.5px #000;">3</span>
<svg class="b" style="left:1339.40px;top:629.60px;" width="75.2" height="71" viewBox="0 0 75.2 71"><ellipse cx="37.6" cy="35.5" rx="34.9" ry="32.8" fill="none" stroke="#000" stroke-width="3.4"/></svg>
<span class="t" style="left:1367.20px;top:649.00px;font-size:34.40px;color:#000;font-weight:700;transform:scaleX(0.9952);-webkit-text-stroke:0.5px #000;">4</span>
</body></html>
